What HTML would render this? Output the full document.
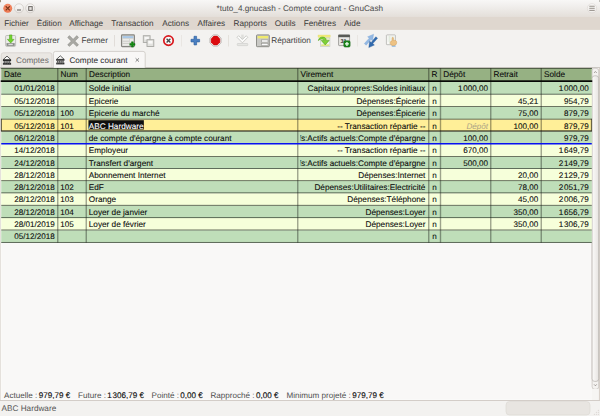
<!DOCTYPE html>
<html lang="fr"><head><meta charset="utf-8"><title>GnuCash</title>
<style>
html,body{margin:0;padding:0;}
body{text-rendering:geometricPrecision;width:600px;height:416px;overflow:hidden;background:#f3f2f0;font-family:"Liberation Sans",sans-serif;font-size:8px;color:#1a1a1a;position:relative;}
#w{position:absolute;left:0;top:0;width:600px;height:416px;overflow:hidden;}
svg{display:block;}
</style></head><body><div id="w">

<!-- window buttons -->
<svg style="position:absolute;left:0;top:0" width="600" height="31" viewBox="0 0 600 31">
 <defs>
  <linearGradient id="gt" x1="0" y1="0" x2="0" y2="1"><stop offset="0" stop-color="#f8f7f6"/><stop offset="0.35" stop-color="#f1efed"/><stop offset="1" stop-color="#e4dfda"/></linearGradient>
  <radialGradient id="gc" cx="0.5" cy="0.35" r="0.7"><stop offset="0" stop-color="#f59572"/><stop offset="1" stop-color="#ec7048"/></radialGradient>
  <linearGradient id="gb" x1="0" y1="0" x2="0" y2="1"><stop offset="0" stop-color="#f9f8f7"/><stop offset="1" stop-color="#ebe8e5"/></linearGradient>
 </defs>
 <rect x="0" y="0" width="600" height="16.7" fill="url(#gt)"/>
 <rect x="0" y="16.6" width="600" height="13.3" fill="#dfd7cf"/>
 <rect x="0" y="0" width="0.9" height="2.2" fill="#7d6a4c" opacity="0.8"/><rect x="599.2" y="0" width="0.8" height="2" fill="#9a958f" opacity="0.7"/>
 <circle cx="7.75" cy="8.3" r="4.45" fill="url(#gc)"/>
 <path d="M5.7 6.25 L9.8 10.35 M9.8 6.25 L5.7 10.35" stroke="#7a3519" stroke-width="1.15" fill="none"/>
 <circle cx="19" cy="8.3" r="4.5" fill="url(#gb)" stroke="#cbc6c0" stroke-width="0.7"/>
 <rect x="17" y="9.3" width="4" height="1.4" fill="#8a8682"/>
 <circle cx="30.2" cy="8.3" r="4.5" fill="url(#gb)" stroke="#cbc6c0" stroke-width="0.7"/>
 <rect x="28.7" y="6.6" width="3.5" height="3.8" fill="#e6e3e0" stroke="#706c68" stroke-width="1.05"/>
 <circle cx="592" cy="8.3" r="4.7" fill="url(#gb)" stroke="#d6d1cc" stroke-width="0.5"/>
 <path d="M589.3 6.8 H594.7 M589.3 8.9 H594.7 M589.3 11 H594.7" stroke="#fdfdfc" stroke-width="0.7"/><path d="M589.3 6.25 H594.7 M589.3 8.3 H594.7 M589.3 10.4 H594.7" stroke="#857e77" stroke-width="0.85"/>
</svg>
<!-- toolbar icons -->
<svg style="position:absolute;left:0;top:30px" width="600" height="22" viewBox="0 30 600 22">
 <!-- save -->
 <rect x="5.6" y="35.5" width="10" height="10.9" rx="1" fill="#ebebe8" stroke="#adada8" stroke-width="0.7"/>
 <rect x="6.5" y="43.1" width="8.2" height="2.8" fill="#8b8d89"/>
 <rect x="8.4" y="43.8" width="4.4" height="1.3" fill="#dcdcd8"/>
 <path d="M9.5 34.9 H11.9 V39.4 H14 L10.7 43 L7.4 39.4 H9.5 Z" fill="#72d42d" stroke="#4ea317" stroke-width="0.55" stroke-linejoin="round"/>
 <!-- close x -->
 <path d="M69.4 37.4 L76.8 44.8 M76.8 37.4 L69.4 44.8" stroke="#989893" stroke-width="2.9" stroke-linecap="square"/><path d="M69.4 37.4 L76.8 44.8 M76.8 37.4 L69.4 44.8" stroke="#a9a9a4" stroke-width="1.9" stroke-linecap="square"/>
 <!-- sep -->
 <rect x="114.2" y="35" width="0.8" height="11.5" fill="#dcd8d4"/>
 <!-- register + -->
 <rect x="121.5" y="34.9" width="12.9" height="11.7" rx="0.8" fill="#d6d6d2" stroke="#858580" stroke-width="1.1"/>
 <rect x="122.6" y="36.1" width="10.6" height="2" fill="#a9c8e6"/>
 <rect x="122.8" y="39" width="6.2" height="6.6" fill="#ecece9"/><rect x="130" y="39" width="3.2" height="3" fill="#ecece9"/><path d="M122.6 41.2 H129 M122.6 43.4 H129" stroke="#b5b5b0" stroke-width="0.6"/>
 <path d="M131.5 41.8 H133.3 V43.5 H135 V45.3 H133.3 V47.1 H131.5 V45.3 H129.8 V43.5 H131.5 Z" fill="#128a12" stroke="#0a6d0a" stroke-width="0.45" stroke-linejoin="round"/>
 <!-- duplicate -->
 <rect x="143.3" y="35.7" width="6.8" height="6.8" fill="#dededb" stroke="#a9a9a5" stroke-width="0.9"/><rect x="144.6" y="37" width="4.2" height="2.6" fill="#f7f7f6"/>
 <rect x="147" y="39.7" width="6.8" height="6.8" fill="#e2e2df" stroke="#a6a6a2" stroke-width="0.9"/><rect x="148.3" y="41" width="4.2" height="2.6" fill="#f9f9f8"/>
 <!-- delete -->
 <circle cx="168.5" cy="40.6" r="4.7" fill="#fbfbfb" stroke="#d8191e" stroke-width="1.75"/>
 <path d="M166.6 38.7 L170.4 42.5 M170.4 38.7 L166.6 42.5" stroke="#4a4a4a" stroke-width="1.4"/>
 <rect x="181.2" y="35" width="0.8" height="11.5" fill="#e6e3df"/>
 <!-- blue plus -->
 <path d="M194 36.3 H196.6 V39.3 H199.6 V41.9 H196.6 V44.9 H194 V41.9 H191 V39.3 H194 Z" fill="#4a7fc1" stroke="#3465a4" stroke-width="0.7" stroke-linejoin="round"/>
 <!-- stop -->
 <path d="M213.2 34.9 H217.8 L221.1 38.2 V42.8 L217.8 46.1 H213.2 L209.9 42.8 V38.2 Z" fill="#fafaf9" stroke="#b4b0ac" stroke-width="0.8"/>
 <path d="M213.7 36.1 H217.3 L219.9 38.7 V42.3 L217.3 44.9 H213.7 L211.1 42.3 V38.7 Z" fill="#dc0a0e" stroke="#c40a0c" stroke-width="0.5"/>
 <rect x="228.2" y="35" width="0.8" height="11.5" fill="#e0dcd8"/>
 <!-- grey down arrow -->
 <rect x="241.2" y="34.6" width="2.5" height="4.6" fill="#dededb"/><path d="M237 37.3 L238.6 35.7 L242.4 39.5 L246.2 35.7 L247.8 37.3 L242.4 42.8 Z" fill="#fcfcfb" stroke="#c3c3bf" stroke-width="0.8" stroke-linejoin="round"/>
 <rect x="237.2" y="43.5" width="10.6" height="2.1" rx="0.6" fill="#e6e6e3" stroke="#cbcbc7" stroke-width="0.6"/>
 <!-- split icon -->
 <rect x="256.5" y="34.9" width="12.8" height="11.8" rx="0.8" fill="#c9c9c5" stroke="#85857f" stroke-width="0.9"/>
 <rect x="257.6" y="36" width="10.6" height="2.4" fill="#f0ea6e"/>
 <rect x="261.6" y="39.9" width="6.4" height="2.2" fill="#fafafa" stroke="#8c8c87" stroke-width="0.5"/>
 <rect x="261.6" y="43.4" width="6.4" height="2.2" fill="#fafafa" stroke="#8c8c87" stroke-width="0.5"/>
 <!-- jump -->
 <rect x="318" y="35" width="12.2" height="2.3" fill="#f1eb7c" stroke="#dcd66a" stroke-width="0.3"/>
 <rect x="320.6" y="38" width="9.3" height="8.6" fill="#f2f4ee" stroke="#bfc3b9" stroke-width="0.6"/>
 <rect x="321.2" y="44.4" width="8.1" height="1.5" fill="#dde67c"/>
 <rect x="321.2" y="38.6" width="8.1" height="1.1" fill="#e6ecb0"/>
 <path d="M318.4 40.6 C318.6 36.6 324.2 36 326 38.8 L326.1 40.4 H329.2 L325.2 44.9 L321.2 40.4 H323.9 C323.4 38.6 320.4 38.4 318.4 40.6 Z" fill="#7fd136" stroke="#4f9f18" stroke-width="0.55" stroke-linejoin="round"/>
 <!-- calendar -->
 <rect x="338.6" y="35" width="11" height="10.6" rx="0.6" fill="#e9e9e6" stroke="#8e8e8a" stroke-width="0.8"/>
 <rect x="338.3" y="34.7" width="11.6" height="2.5" fill="#585a56"/>
 <text x="340.5" y="42.7" font-family="Liberation Sans, sans-serif" font-size="5.6" font-weight="bold" fill="#2a2a2a">31</text>
 <rect x="343.8" y="40.8" width="6.3" height="6.3" rx="1.3" fill="#1a861a" stroke="#0d5c0d" stroke-width="0.5"/>
 <path d="M346.95 42 V45.9 M345 43.95 H348.9" stroke="#f2fff2" stroke-width="1.25"/>
 <rect x="357" y="35" width="0.8" height="11.5" fill="#e6e3df"/>
 <!-- blue arrows -->
 <path d="M364.3 43.6 L369.2 38.2 L367.6 36.8 L373.6 34.2 L372.6 40.8 L371 39.6 L366.2 45.2 Z" fill="#93b8e3" stroke="#7ba4d6" stroke-width="0.35"/>
 <path d="M377.6 38.2 L372.8 43.6 L374.4 45 L368.8 47.6 L369.6 41.2 L371.2 42.4 L375.8 36.8 Z" fill="#316aad" stroke="#27599a" stroke-width="0.35"/>
 <!-- doc + hand -->
 <rect x="386.4" y="34.9" width="9" height="9.8" rx="0.6" fill="#f8f8f6" stroke="#b3b3ae" stroke-width="0.8"/>
 <path d="M387.6 37 H394.4 M387.6 39 H394.4 M387.6 41 H394.4 M389.6 36 V44" stroke="#d2e0cc" stroke-width="0.5"/>
 <rect x="391.8" y="45.4" width="3.8" height="1.4" fill="#8ab8e6"/>
 <path d="M392.1 38 C392.1 37.1 393.4 37.1 393.4 38 V40.4 C395.4 40 396.8 40.8 396.7 42.6 C396.5 44.8 395.2 45.6 393.4 45.6 C391.2 45.6 390.1 44.3 390.3 42.6 C390.4 41.5 391.2 41 392.1 40.8 Z" fill="#edc283" stroke="#d39f58" stroke-width="0.5"/>
</svg>

<!-- tabs -->
<svg style="position:absolute;left:0;top:48px" width="600" height="24" viewBox="0 48 600 24">
 <path d="M1.2 68 V55 Q1.2 52.8 3.4 52.8 H49.8 Q52 52.8 52 55 V68 Z" fill="#eae7e3" stroke="#d2cdc8" stroke-width="0.7"/>
 <rect x="0" y="67.2" width="600" height="0.8" fill="#c4bfba"/>
 <path d="M53.4 68.4 V53.6 Q53.4 51.4 55.6 51.4 H143 Q145.2 51.4 145.2 53.6 V68.4 Z" fill="#f8f7f6" stroke="#c6c1bc" stroke-width="0.7"/>
</svg>
<svg style="position:absolute;left:0;top:50px" width="150" height="18" viewBox="0 50 150 18">
 <g id="bank">
  <path d="M3.1 59.7 L7 56.1 L10.9 59.7 Z" fill="#fafaf9" stroke="#2c2c2c" stroke-width="0.75" stroke-linejoin="round"/>
  <rect x="2.9" y="59.6" width="8.2" height="1.5" fill="#2a2a2a"/>
  <rect x="3.5" y="61.1" width="7" height="1.8" fill="#b9b9b6"/>
  <path d="M4.3 61.1 V62.9 M6.1 61.1 V62.9 M7.9 61.1 V62.9 M9.7 61.1 V62.9" stroke="#454545" stroke-width="0.9"/>
  <rect x="2.9" y="62.9" width="8.2" height="1.8" fill="#2e2e2e"/>
  <path d="M3.6 63.75 H10.4" stroke="#9a9a98" stroke-width="0.45" stroke-dasharray="0.8 1"/>
 </g>
 <use href="#bank" x="53.3" y="-0.3"/>
 <path d="M135.6 58.3 L139 61.7 M139 58.3 L135.6 61.7" stroke="#777" stroke-width="0.9"/>
</svg>
<!-- content area -->
<svg style="position:absolute;left:0;top:60px" width="600" height="356" viewBox="0 60 600 356">
 <rect x="0" y="68" width="600" height="332.4" fill="#d9d2cb"/>
 <rect x="0.65" y="68" width="598" height="332.1" fill="#fdfdfc"/>
 <rect x="1.3" y="68" width="590.5" height="331.6" fill="#f9f8f7"/>
 <!-- scrollbar -->
 <rect x="592.1" y="68.3" width="6.6" height="321" rx="2.6" fill="#f4f2f0" stroke="#bab5b0" stroke-width="0.6"/>
 <rect x="591.75" y="389" width="6.9" height="11" fill="#f6f5f3"/>
 <linearGradient id="sg" x1="0" y1="0" x2="1" y2="0"><stop offset="0" stop-color="#fbfaf9"/><stop offset="1" stop-color="#e7e4e1"/></linearGradient>
 <rect x="592.1" y="75.8" width="6.6" height="305.6" rx="2.6" fill="url(#sg)" stroke="#ada8a3" stroke-width="0.6"/>
 <path d="M594.1 72.9 L595.4 71.5 L596.7 72.9" fill="none" stroke="#8a8580" stroke-width="0.8"/>
 <path d="M594.1 384.4 L595.4 385.8 L596.7 384.4" fill="none" stroke="#8a8580" stroke-width="0.8"/>
 <!-- status line -->
 <rect x="0" y="400" width="600" height="0.8" fill="#cdc7c1"/>
 <rect x="506" y="401.5" width="84" height="13.5" rx="3.5" fill="#e8e5e1" stroke="#dad6d1" stroke-width="0.6"/>
</svg>
<svg style="position:absolute;left:0;top:0" width="600" height="416" viewBox="0 0 600 416" font-family="Liberation Sans, sans-serif" font-size="8.1" fill="#0c0c0c" text-rendering="geometricPrecision">
<rect x="1.25" y="68.0" width="590.5" height="14.0" fill="#96b183"/>
<rect x="1.25" y="82.00" width="590.5" height="12.55" fill="#bfdeb9"/>
<rect x="1.25" y="94.50" width="590.5" height="12.45" fill="#f6ffda"/>
<rect x="1.25" y="106.90" width="590.5" height="12.60" fill="#bfdeb9"/>
<rect x="1.25" y="119.45" width="590.5" height="11.90" fill="#ffef98"/>
<rect x="1.25" y="131.30" width="590.5" height="12.85" fill="#bfdeb9"/>
<rect x="1.25" y="144.10" width="590.5" height="12.85" fill="#f6ffda"/>
<rect x="1.25" y="156.90" width="590.5" height="11.95" fill="#bfdeb9"/>
<rect x="1.25" y="168.80" width="590.5" height="12.25" fill="#f6ffda"/>
<rect x="1.25" y="181.00" width="590.5" height="12.25" fill="#bfdeb9"/>
<rect x="1.25" y="193.20" width="590.5" height="12.45" fill="#f6ffda"/>
<rect x="1.25" y="205.60" width="590.5" height="12.45" fill="#bfdeb9"/>
<rect x="1.25" y="218.00" width="590.5" height="12.35" fill="#f6ffda"/>
<rect x="1.25" y="230.30" width="590.5" height="12.45" fill="#bfdeb9"/>
<rect x="88.45" y="120.20" width="55.4" height="9.3" fill="#0f0f0f"/>
<rect x="57.05" y="68.0" width="1.4" height="174.70" fill="#000" fill-opacity="0.36"/>
<rect x="85.55" y="68.0" width="1.4" height="174.70" fill="#000" fill-opacity="0.36"/>
<rect x="297.05" y="68.0" width="1.4" height="174.70" fill="#000" fill-opacity="0.36"/>
<rect x="428.05" y="68.0" width="1.4" height="174.70" fill="#000" fill-opacity="0.36"/>
<rect x="439.80" y="68.0" width="1.4" height="174.70" fill="#000" fill-opacity="0.36"/>
<rect x="490.05" y="68.0" width="1.4" height="174.70" fill="#000" fill-opacity="0.36"/>
<rect x="540.55" y="68.0" width="1.4" height="174.70" fill="#000" fill-opacity="0.36"/>
<rect x="1.25" y="93.78" width="590.5" height="0.8" fill="#1c2419" fill-opacity="0.78"/>
<rect x="1.25" y="106.18" width="590.5" height="0.8" fill="#1c2419" fill-opacity="0.78"/>
<rect x="1.25" y="156.18" width="590.5" height="0.8" fill="#1c2419" fill-opacity="0.78"/>
<rect x="1.25" y="168.08" width="590.5" height="0.8" fill="#1c2419" fill-opacity="0.78"/>
<rect x="1.25" y="180.28" width="590.5" height="0.8" fill="#1c2419" fill-opacity="0.78"/>
<rect x="1.25" y="192.48" width="590.5" height="0.8" fill="#1c2419" fill-opacity="0.78"/>
<rect x="1.25" y="204.88" width="590.5" height="0.8" fill="#1c2419" fill-opacity="0.78"/>
<rect x="1.25" y="217.28" width="590.5" height="0.8" fill="#1c2419" fill-opacity="0.78"/>
<rect x="1.25" y="229.58" width="590.5" height="0.8" fill="#1c2419" fill-opacity="0.78"/>
<rect x="1.25" y="241.98" width="590.5" height="0.8" fill="#1c2419" fill-opacity="0.78"/>
<rect x="0.75" y="67.95" width="591.5" height="0.75" fill="#222a1f" fill-opacity="0.85"/>
<rect x="0.75" y="80.30" width="591.5" height="1.7" fill="#060806"/>
<rect x="1.25" y="118.75" width="590.5" height="0.8" fill="#2d2a18" fill-opacity="0.8"/>
<rect x="1.25" y="130.40" width="590.5" height="1.2" fill="#15150f" fill-opacity="0.9"/>
<rect x="0.90" y="118.75" width="0.85" height="12.55" fill="#1a1a10" fill-opacity="0.85"/>
<rect x="590.90" y="118.75" width="0.85" height="12.55" fill="#1a1a10" fill-opacity="0.85"/>
<rect x="1.25" y="143.00" width="590.5" height="1.5" fill="#0710f0"/>
<clipPath id="cv"><rect x="300.45" y="68.0" width="128.30" height="200"/></clipPath>
<g stroke="#0c0c0c" stroke-width="0.09">
<text x="4.05" y="76.75" font-size="8.22">Date</text>
<text x="60.55" y="76.75" font-size="8.22">Num</text>
<text x="89.05" y="76.75" font-size="8.22">Description</text>
<text x="300.55" y="76.75" font-size="8.22">Virement</text>
<text x="431.55" y="76.75" font-size="8.22">R</text>
<text x="443.30" y="76.75" font-size="8.22">Dépôt</text>
<text x="493.55" y="76.75" font-size="8.22">Retrait</text>
<text x="544.05" y="76.75" font-size="8.22">Solde</text>
<text x="54.80" y="91.10" text-anchor="end">01/01/2018</text>
<text x="88.75" y="91.10" font-size="8.22">Solde initial</text>
<text x="425.40" y="91.10" text-anchor="end" font-size="8.22">Capitaux propres:Soldes initiaux</text>
<text x="434.62" y="91.10" text-anchor="middle">n</text>
<text x="488.05" y="91.10" text-anchor="end" word-spacing="-1.35">1 000,00</text>
<text x="588.80" y="91.10" text-anchor="end" word-spacing="-1.35">1 000,00</text>
<text x="54.80" y="103.60" text-anchor="end">05/12/2018</text>
<text x="88.75" y="103.60" font-size="8.22">Epicerie</text>
<text x="425.40" y="103.60" text-anchor="end" font-size="8.22">Dépenses:Épicerie</text>
<text x="434.62" y="103.60" text-anchor="middle">n</text>
<text x="538.30" y="103.60" text-anchor="end">45,21</text>
<text x="588.80" y="103.60" text-anchor="end">954,79</text>
<text x="54.80" y="116.00" text-anchor="end">05/12/2018</text>
<text x="60.25" y="116.00">100</text>
<text x="88.75" y="116.00" font-size="8.22">Epicerie du marché</text>
<text x="425.40" y="116.00" text-anchor="end" font-size="8.22">Dépenses:Épicerie</text>
<text x="434.62" y="116.00" text-anchor="middle">n</text>
<text x="538.30" y="116.00" text-anchor="end">75,00</text>
<text x="588.80" y="116.00" text-anchor="end">879,79</text>
<text x="54.80" y="128.55" text-anchor="end">05/12/2018</text>
<text x="60.25" y="128.55">101</text>
<text x="88.75" y="128.55" fill="#fff" stroke="#fff" font-size="8.22">ABC Hardware</text>
<text x="425.40" y="128.55" text-anchor="end" font-size="8.22">-- Transaction répartie --</text>
<text x="434.62" y="128.55" text-anchor="middle">n</text>
<text x="488.05" y="128.55" text-anchor="end" fill="#aca385" stroke="none" font-style="italic">Dépôt</text>
<text x="538.30" y="128.55" text-anchor="end">100,00</text>
<text x="588.80" y="128.55" text-anchor="end">879,79</text>
<text x="54.80" y="140.90" text-anchor="end">06/12/2018</text>
<text x="88.75" y="140.90" font-size="8.22">de compte d'épargne à compte courant</text>
<text x="425.40" y="140.90" text-anchor="end" font-size="8.22" clip-path="url(#cv)">Actifs:Actifs actuels:Compte d'épargne</text>
<text x="434.62" y="140.90" text-anchor="middle">n</text>
<text x="488.05" y="140.90" text-anchor="end">100,00</text>
<text x="588.80" y="140.90" text-anchor="end">979,79</text>
<text x="54.80" y="153.40" text-anchor="end">14/12/2018</text>
<text x="88.75" y="153.40" font-size="8.22">Employeur</text>
<text x="425.40" y="153.40" text-anchor="end" font-size="8.22">-- Transaction répartie --</text>
<text x="434.62" y="153.40" text-anchor="middle">n</text>
<text x="488.05" y="153.40" text-anchor="end">670,00</text>
<text x="588.80" y="153.40" text-anchor="end" word-spacing="-1.35">1 649,79</text>
<text x="54.80" y="166.00" text-anchor="end">24/12/2018</text>
<text x="88.75" y="166.00" font-size="8.22">Transfert d'argent</text>
<text x="425.40" y="166.00" text-anchor="end" font-size="8.22" clip-path="url(#cv)">Actifs:Actifs actuels:Compte d'épargne</text>
<text x="434.62" y="166.00" text-anchor="middle">n</text>
<text x="488.05" y="166.00" text-anchor="end">500,00</text>
<text x="588.80" y="166.00" text-anchor="end" word-spacing="-1.35">2 149,79</text>
<text x="54.80" y="177.90" text-anchor="end">28/12/2018</text>
<text x="88.75" y="177.90" font-size="8.22">Abonnement Internet</text>
<text x="425.40" y="177.90" text-anchor="end" font-size="8.22">Dépenses:Internet</text>
<text x="434.62" y="177.90" text-anchor="middle">n</text>
<text x="538.30" y="177.90" text-anchor="end">20,00</text>
<text x="588.80" y="177.90" text-anchor="end" word-spacing="-1.35">2 129,79</text>
<text x="54.80" y="190.10" text-anchor="end">28/12/2018</text>
<text x="60.25" y="190.10">102</text>
<text x="88.75" y="190.10" font-size="8.22">EdF</text>
<text x="425.40" y="190.10" text-anchor="end" font-size="8.22">Dépenses:Utilitaires:Electricité</text>
<text x="434.62" y="190.10" text-anchor="middle">n</text>
<text x="538.30" y="190.10" text-anchor="end">78,00</text>
<text x="588.80" y="190.10" text-anchor="end" word-spacing="-1.35">2 051,79</text>
<text x="54.80" y="202.30" text-anchor="end">28/12/2018</text>
<text x="60.25" y="202.30">103</text>
<text x="88.75" y="202.30" font-size="8.22">Orange</text>
<text x="425.40" y="202.30" text-anchor="end" font-size="8.22">Dépenses:Téléphone</text>
<text x="434.62" y="202.30" text-anchor="middle">n</text>
<text x="538.30" y="202.30" text-anchor="end">45,00</text>
<text x="588.80" y="202.30" text-anchor="end" word-spacing="-1.35">2 006,79</text>
<text x="54.80" y="214.70" text-anchor="end">28/12/2018</text>
<text x="60.25" y="214.70">104</text>
<text x="88.75" y="214.70" font-size="8.22">Loyer de janvier</text>
<text x="425.40" y="214.70" text-anchor="end" font-size="8.22">Dépenses:Loyer</text>
<text x="434.62" y="214.70" text-anchor="middle">n</text>
<text x="538.30" y="214.70" text-anchor="end">350,00</text>
<text x="588.80" y="214.70" text-anchor="end" word-spacing="-1.35">1 656,79</text>
<text x="54.80" y="227.10" text-anchor="end">28/01/2019</text>
<text x="60.25" y="227.10">105</text>
<text x="88.75" y="227.10" font-size="8.22">Loyer de février</text>
<text x="425.40" y="227.10" text-anchor="end" font-size="8.22">Dépenses:Loyer</text>
<text x="434.62" y="227.10" text-anchor="middle">n</text>
<text x="538.30" y="227.10" text-anchor="end">350,00</text>
<text x="588.80" y="227.10" text-anchor="end" word-spacing="-1.35">1 306,79</text>
<text x="54.80" y="239.40" text-anchor="end">05/12/2018</text>
<text x="434.62" y="239.40" text-anchor="middle">n</text>
</g></svg>
<!-- summary -->
<svg style="position:absolute;left:0;top:0" width="600" height="416" viewBox="0 0 600 416" font-family="Liberation Sans, sans-serif" font-size="8.2" text-rendering="geometricPrecision">
<text x="299.8" y="11.25" text-anchor="middle" fill="#4a4a4a">*tuto_4.gnucash - Compte courant - GnuCash</text>
<text x="4.2" y="26" fill="#3a3a3a">Fichier</text>
<text x="36.7" y="26" fill="#3a3a3a">Édition</text>
<text x="69.2" y="26" fill="#3a3a3a">Affichage</text>
<text x="111.2" y="26" fill="#3a3a3a">Transaction</text>
<text x="162.2" y="26" fill="#3a3a3a">Actions</text>
<text x="197.6" y="26" fill="#3a3a3a">Affaires</text>
<text x="233.6" y="26" fill="#3a3a3a">Rapports</text>
<text x="274.7" y="26" fill="#3a3a3a">Outils</text>
<text x="303.7" y="26" fill="#3a3a3a">Fenêtres</text>
<text x="344.1" y="26" fill="#3a3a3a">Aide</text>
<text x="19.4" y="43.15" fill="#424242">Enregistrer</text>
<text x="81.5" y="43.15" fill="#424242">Fermer</text>
<text x="271.3" y="43.15" fill="#424242">Répartition</text>
<text x="16" y="63" fill="#6a6a6a">Comptes</text>
<text x="69.4" y="62.5" fill="#2a2a2a">Compte courant</text>
<text x="4" y="397.7" font-size="8.1" fill="#0a0a0a"><tspan fill="#4e4e4e">Actuelle : </tspan><tspan dx="-0.9" stroke="#0a0a0a" stroke-width="0.12">979,79 €</tspan></text>
<text x="78" y="397.7" font-size="8.1" fill="#0a0a0a"><tspan fill="#4e4e4e">Future : </tspan><tspan dx="-0.9" stroke="#0a0a0a" stroke-width="0.12">1<tspan dx="0.7">306,79 €</tspan></tspan></text>
<text x="151.5" y="397.7" font-size="8.1" fill="#0a0a0a"><tspan fill="#4e4e4e">Pointé : </tspan><tspan dx="-0.9" stroke="#0a0a0a" stroke-width="0.12">0,00 €</tspan></text>
<text x="210.5" y="397.7" font-size="8.1" fill="#0a0a0a"><tspan fill="#4e4e4e">Rapproché : </tspan><tspan dx="-0.9" stroke="#0a0a0a" stroke-width="0.12">0,00 €</tspan></text>
<text x="286.5" y="397.7" font-size="8.1" fill="#0a0a0a"><tspan fill="#4e4e4e">Minimum projeté : </tspan><tspan dx="-0.9" stroke="#0a0a0a" stroke-width="0.12">979,79 €</tspan></text>
<text x="1.6" y="410.5" fill="#555">ABC Hardware</text>
</svg>
<!-- status -->
<svg style="position:absolute;left:590px;top:406px" width="10" height="10" viewBox="0 0 10 10"><g fill="#cfcac5"><circle cx="8.3" cy="8.3" r="0.5"/><circle cx="6.3" cy="8.3" r="0.5"/><circle cx="4.3" cy="8.3" r="0.5"/><circle cx="8.3" cy="6.3" r="0.5"/><circle cx="6.3" cy="6.3" r="0.5"/><circle cx="8.3" cy="4.3" r="0.5"/></g></svg>

</div></body></html>
